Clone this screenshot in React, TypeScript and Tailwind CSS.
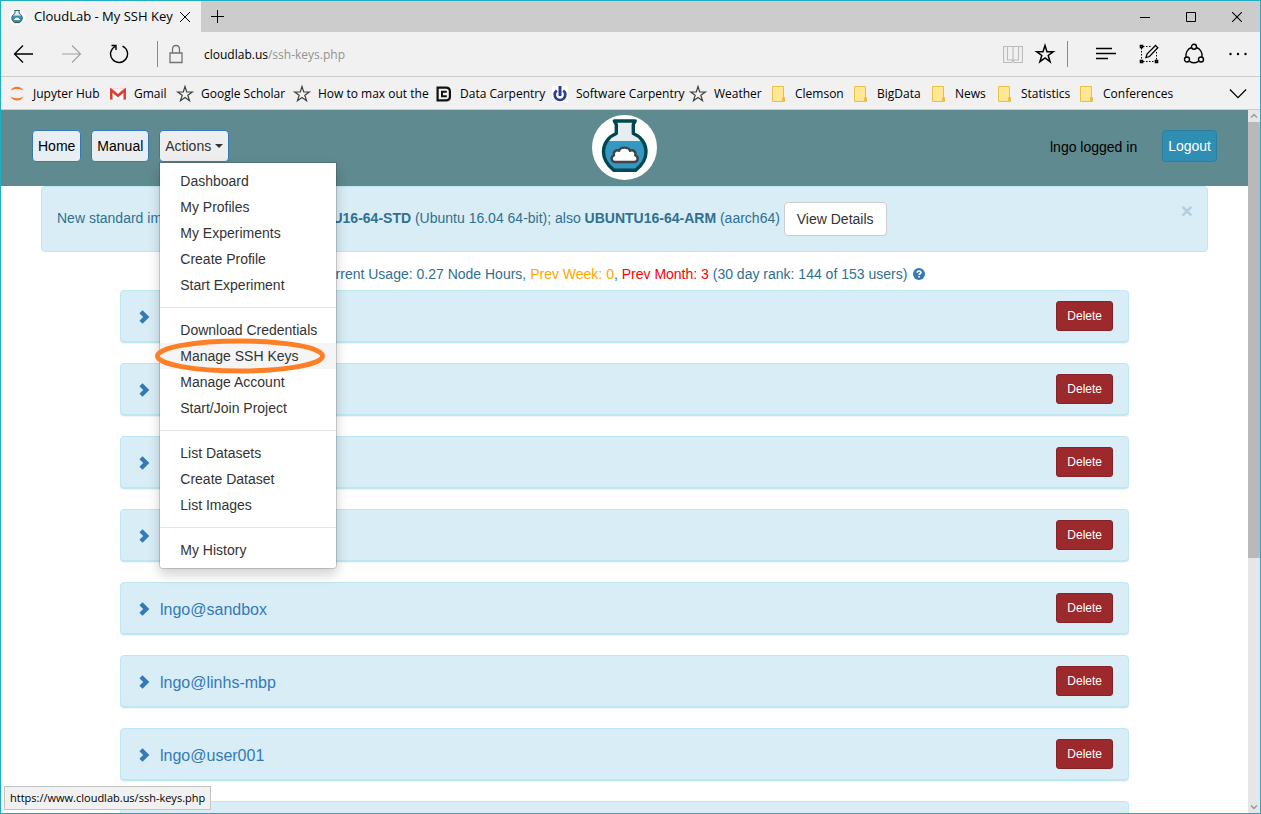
import React from "react";

const ui = "font-['Open_Sans',sans-serif]";

function Flask({ className }: { className: string }) {
  return (
    <svg viewBox="0 0 65 65" className={className} aria-hidden="true">
      <circle cx="32.5" cy="32.5" r="32.5" fill="#fff" />
      <path d="M25 6V18.500C17 21.500 11.500 28 11.500 36.500C11.500 44 16 50 22.500 55.500H43C49.500 50 54 44 54 36.500C54 28 48.500 21.500 40.500 18.500V6Z" fill="#e6edf0" />
      <path d="M14.500 26H51C56 36 54 47 43 55.500H22.500C11.500 47 9.500 36 14.500 26Z" fill="#3399c2" />
      <path d="M22.300 6H43.200L41.300 9.500V18.500C49 21.500 54 28.500 54 37C54 45 49 51 43.500 55.300H22C16.500 51 11.500 45 11.500 37C11.500 28.500 16.500 21.500 24.300 18.500V9.500Z" fill="none" stroke="#01474f" strokeWidth="3.400" strokeLinejoin="round" />
      <path d="M23.500 47C18.800 47 18.500 41.500 22 40.300C21 36.500 24.500 34.300 27 35.800C28.500 31.500 36.500 31.500 38 35.800C40.800 34.300 44.300 36.500 43.300 40.300C46.800 41.500 46.500 47 41.800 47Z" fill="#fff" stroke="#444" strokeWidth="2.400" strokeLinejoin="round" />
    </svg>
  );
}

function Line({ d, className, w = 1.2, box = "0 0 20 20" }: { d: string; className: string; w?: number; box?: string }) {
  return (
    <svg viewBox={box} className={className} fill="none" stroke="currentColor" strokeWidth={w} aria-hidden="true">
      <path d={d} />
    </svg>
  );
}

const starPath = "M10 2.500L11.700 8H17.300L12.800 11.300L14.500 16.700L10 13.400L5.500 16.700L7.200 11.300L2.700 8H8.300Z";

function BookmarkIcon({ kind }: { kind: string }) {
  const size = "h-4 w-4 shrink-0";
  if (kind === "jupyter")
    return (
      <svg viewBox="0 0 16 16" className={size} fill="#f37726" aria-hidden="true">
        <path d="M1.500 4.800C4 -.5 12 -.5 14.500 4.800C11 2.400 5 2.400 1.500 4.800ZM1.500 10.500C4 15.800 12 15.800 14.500 10.500C11 12.900 5 12.900 1.500 10.500Z" />
      </svg>
    );
  if (kind === "gmail")
    return (
      <svg viewBox="0 0 16 16" className={size} aria-hidden="true">
        <rect y="2.500" width="16" height="11" fill="#f4c4c0" />
        <path d="M3 3H13L8 7.500ZM3 13.500V8L8 11L13 8V13.500Z" fill="#fff" />
        <path d="M1.200 13.500V4L8 9.700L14.800 4V13.500" fill="none" stroke="#dc3b33" strokeWidth="2.300" />
      </svg>
    );
  if (kind === "data")
    return (
      <svg viewBox="0 0 16 16" className={size} fill="none" stroke="#111" strokeWidth="2.200" aria-hidden="true">
        <path d="M1.600 1.600H10Q13.900 1.600 13.900 5.500V10.500Q13.900 14.400 10 14.400H1.600Z" />
        <path d="M10.800 5.800H6V10.200H10.800" strokeWidth="2" />
      </svg>
    );
  if (kind === "software")
    return (
      <svg viewBox="0 0 16 16" className={size} fill="none" stroke="#2b3f91" aria-hidden="true">
        <rect width="16" height="16" fill="#fff" stroke="none" />
        <path d="M4.800 4.500A5.300 5.300 0 1 0 11.200 4.500" strokeWidth="2.700" />
        <path d="M8 0V10" strokeWidth="3" />
      </svg>
    );
  if (kind === "folder")
    return (
      <svg viewBox="0 0 16 16" className={size} fill="#ffe793" stroke="#e9c046" aria-hidden="true">
        <path d="M1.500 .5H12.500V15.500H1.500ZM11.500 15.500V11.500L12.500 10.500L13.500 11.500V15.500Z" />
      </svg>
    );
  return <Line d={starPath} className="-mx-0.5 h-5 w-5 shrink-0 text-neutral-700" w={1.2} />;
}

const bookmarks = [
  { kind: "jupyter", label: "Jupyter Hub", width: "w-[101px]" },
  { kind: "gmail", label: "Gmail", width: "w-[67px]" },
  { kind: "star", label: "Google Scholar", width: "w-[117px]" },
  { kind: "star", label: "How to max out the", width: "w-[142px]" },
  { kind: "data", label: "Data Carpentry", width: "w-[116px]" },
  { kind: "software", label: "Software Carpentry", width: "w-[138px]" },
  { kind: "star", label: "Weather", width: "w-[81px]" },
  { kind: "folder", label: "Clemson", width: "w-[82px]" },
  { kind: "folder", label: "BigData", width: "w-[78px]" },
  { kind: "folder", label: "News", width: "w-[66px]" },
  { kind: "folder", label: "Statistics", width: "w-[82px]" },
  { kind: "folder", label: "Conferences", width: "w-[100px]" },
];

const menuGroups = [
  ["Dashboard", "My Profiles", "My Experiments", "Create Profile", "Start Experiment"],
  ["Download Credentials", "Manage SSH Keys", "Manage Account", "Start/Join Project"],
  ["List Datasets", "Create Dataset", "List Images"],
  ["My History"],
];

const keys = ["", "", "", "", "lngo@sandbox", "lngo@linhs-mbp", "lngo@user001"];

function TitleBar() {
  return (
    <div className="flex h-[31px] shrink-0 items-stretch bg-[#ccc]">
      <div className="flex w-[200px] items-center bg-[#f1f1f1] pl-2">
        <Flask className="h-4 w-4" />
        <span className="ml-[9px] w-[145px] whitespace-nowrap text-[13px]">CloudLab - My SSH Key</span>
        <button aria-label="Close tab"><Line d="M1 1L11 11M11 1L1 11" box="0 0 12 12" w={1} className="h-3 w-3" /></button>
      </div>
      <button aria-label="New tab" className="pl-2.5"><Line d="M6.500 0V13M0 6.500H13" box="0 0 13 13" w={1} className="h-[13px] w-[13px]" /></button>
      <div className="ml-auto flex items-center gap-9 pr-[18px]">
        <button aria-label="Minimize"><Line d="M0 5.500H10" box="0 0 10 10" w={1} className="h-2.5 w-2.5" /></button>
        <button aria-label="Maximize"><Line d="M.5 .5H9.500V9.500H.5Z" box="0 0 10 10" w={1} className="h-2.5 w-2.5" /></button>
        <button aria-label="Close"><Line d="M0 0L10 10M10 0L0 10" box="0 0 10 10" w={1.1} className="h-2.5 w-2.5" /></button>
      </div>
    </div>
  );
}

function AddressBar() {
  return (
    <div className="flex h-[45px] shrink-0 items-center border-b border-[#ccc] bg-[#f1f1f1] pl-3">
      <button aria-label="Back"><Line d="M20 10H1.500M10 1.500L1.500 10L10 18.500" w={1.3} className="h-5 w-5" /></button>
      <button aria-label="Forward" className="ml-[29px] text-[#a0a0a0]"><Line d="M0 10H18.500M10 1.500L18.500 10L10 18.500" w={1.1} className="h-5 w-5" /></button>
      <button aria-label="Refresh" className="ml-[27px]"><Line d="M13.500 2.200A8.500 8.500 0 1 1 6 2.500M2.500 1.500H7V6" w={1.4} className="h-5 w-5" /></button>
      <span className="ml-7 h-[26px] w-px bg-[#8a8a8a]" />
      <Line d="M1 9H13V18.500H1ZM3.500 9V5.500Q3.500 1.500 7 1.500Q10.500 1.500 10.500 5.500V9" box="0 0 14 20" w={1.3} className="ml-[11px] h-5 w-3.5 text-neutral-500" />
      <div className="ml-[21px] flex-1 pt-0.5 text-xs text-black">cloudlab.us<span className="text-[#919191]">/ssh-keys.php</span></div>
      <button aria-label="Reading view" className="text-[#bbb]"><Line d="M10 2.500V17M10 2.500H4.500V16H9L10 17L11 16H15.500V2.500ZM4 2.500H.6V18.500H8.500L10 17.500L11.500 18.500H19.400V2.500H16" w={1.1} className="h-5 w-5" /></button>
      <button aria-label="Favorites" className="ml-[11px]"><Line d="M11 2.500L13 8.700H19.300L14.200 12.500L16.100 18.700L11 14.900L5.900 18.700L7.800 12.500L2.700 8.700H9Z" box="0 0 22 22" w={1.5} className="h-[22px] w-[22px]" /></button>
      <span className="ml-[11px] h-[26px] w-px bg-[#8a8a8a]" />
      <button aria-label="Hub" className="ml-7"><Line d="M0 4.500H16M0 9.500H20M0 14.500H12" w={1.3} className="h-5 w-5" /></button>
      <button aria-label="Web note" className="ml-[23px]">
        <svg viewBox="0 0 20 20" className="h-5 w-5" fill="none" stroke="currentColor" aria-hidden="true">
          <path d="M2.500 4V17M4 17.500H16M17.500 8V17M4 2.500H12" strokeDasharray="1.500 1.500" />
          <path d="M1.500 1.500H3.500V3.500H1.500ZM1.500 16.500H3.500V18.500H1.500ZM16.500 16.500H18.500V18.500H16.500Z" strokeWidth="1.600" />
          <path d="M7 13.500L8 10L16.500 1.500L18.800 3.800L10.500 12.500Z" strokeWidth="1.300" />
        </svg>
      </button>
      <button aria-label="Share" className="ml-6">
        <svg viewBox="0 0 22 22" className="h-[22px] w-[22px]" fill="none" stroke="currentColor" strokeWidth="1.400" aria-hidden="true">
          <circle cx="11" cy="3.800" r="2.500" /><circle cx="4" cy="16.500" r="2.500" /><circle cx="18" cy="16.500" r="2.500" />
          <path d="M8.500 4.500A8.500 8.500 0 0 0 3 14M13.500 4.500A8.500 8.500 0 0 1 19 14M6.500 18.300A8.500 8.500 0 0 0 15.500 18.300" />
        </svg>
      </button>
      <button aria-label="More" className="ml-[23px] mr-3">
        <svg viewBox="0 0 20 20" className="h-5 w-5" fill="currentColor" aria-hidden="true"><circle cx="2.500" cy="10" r="1.200" /><circle cx="10" cy="10" r="1.200" /><circle cx="17.500" cy="10" r="1.200" /></svg>
      </button>
    </div>
  );
}

function Bookmarks() {
  return (
    <nav aria-label="Favorites" className="flex h-[33px] shrink-0 items-center border-b border-[#ccc] bg-[#f1f1f1] pl-2 pt-0.5">
      {bookmarks.map((b) => (
        <a key={b.label} href="#" className={`flex shrink-0 items-center gap-2 whitespace-nowrap text-xs ${b.width}`}>
          <BookmarkIcon kind={b.kind} />
          {b.label}
        </a>
      ))}
      <button aria-label="More favorites" className="ml-auto mr-[13px]"><Line d="M1 5L10 14L19 5" w={1.4} className="h-5 w-[18px]" /></button>
    </nav>
  );
}

function ActionsMenu() {
  return (
    <div className="absolute left-0 top-8 z-10 w-[178px] rounded-b border border-black/15 bg-white bg-clip-padding py-[5px] text-[#333] shadow-[0_6px_12px_rgba(0,0,0,0.175)]">
      {menuGroups.map((group, i) => (
        <ul key={group[0]} className={i ? "mt-[9px] border-t border-[#e5e5e5] pt-[9px]" : ""}>
          {group.map((item) => (
            <li key={item} className="relative">
              <a href="#" className={`block whitespace-nowrap px-5 py-[3px] leading-5 ${item === "Manage SSH Keys" ? "bg-[#f5f5f5]" : ""}`}>{item}</a>
              {item === "Manage SSH Keys" && (
                <svg viewBox="0 0 172 36" className="pointer-events-none absolute -left-1.5 -top-[5px] z-10 h-9 w-[172px]" aria-hidden="true">
                  <ellipse cx="86" cy="18" rx="82.5" ry="15" fill="none" stroke="#ff7f27" strokeWidth="5" />
                </svg>
              )}
            </li>
          ))}
        </ul>
      ))}
    </div>
  );
}

function Header() {
  const nav = "h-8 rounded border border-[#337ab7] px-[5px]";
  return (
    <header className="grid h-[76px] grid-cols-[1fr_auto_1fr] items-center bg-[#5f8a8f]">
      <div className="flex items-center gap-2.5 pb-1 pl-[31px]">
        <button className={`${nav} bg-[#e8eef1] text-black`}>Home</button>
        <button className={`${nav} bg-[#e8eef1] text-black`}>Manual</button>
        <div className="relative">
          <button aria-expanded="true" className={`${nav} flex items-center gap-1 bg-[#eee] text-[#333]`}>
            Actions
            <svg viewBox="0 0 8 4" className="h-1 w-2" fill="currentColor" aria-hidden="true"><path d="M0 0H8L4 4Z" /></svg>
          </button>
          <ActionsMenu />
        </div>
      </div>
      <Flask className="mb-0.5 h-[65px] w-[65px]" />
      <div className="flex items-center justify-end gap-[25px] pb-1 pr-[31px]">
        <span className="pt-0.5 text-black">lngo logged in</span>
        <button className="h-8 rounded border border-[#2a7fa0] bg-[#2f8fb3] px-[5px] text-white">Logout</button>
      </div>
    </header>
  );
}

function Chevron() {
  return (
    <svg viewBox="0 0 11 14" className="mb-0.5 h-3.5 w-[11px]" fill="none" stroke="#337ab7" strokeWidth="4.400" aria-hidden="true">
      <path d="M2 1.800L7.200 7L2 12.200" />
    </svg>
  );
}

const rowStyle = "h-[53px] shrink-0 rounded border border-[#bce8f1] bg-[#d9edf7] shadow-[inset_0_-1px_0_#bce8f1,0_1px_1px_rgba(0,0,0,0.05)]";

function KeyRow({ name }: { name: string }) {
  return (
    <li className={`flex items-center justify-between pl-[18px] pr-[15px] ${rowStyle}`}>
      <a href="#" aria-label={name || "Key"} className="flex items-center gap-2.5 pt-0.5 text-base text-[#337ab7]">
        <Chevron />
        {name}
      </a>
      <button className="mb-px h-[30px] rounded-[3px] border border-[#852328] bg-[#9c292b] px-2.5 text-xs text-white">Delete</button>
    </li>
  );
}

function Page() {
  return (
    <main className="min-w-0 flex-1 overflow-hidden bg-white font-['Liberation_Sans',Arial,sans-serif] text-sm leading-5 text-[#31708f]">
      <Header />
      <div className="mx-10 flex h-[66px] items-center rounded border border-[#bce8f1] bg-[#d9edf7] pl-[15px] pr-3.5">
        <p className="flex-1 whitespace-nowrap">
          New standard images are available: <b>UBUNTU16-64-STD</b> (Ubuntu 16.04 64-bit); also <b>UBUNTU16-64-ARM</b> (aarch64){" "}
          <button className="h-[34px] rounded border border-[#ccc] bg-white px-3 align-middle text-[#333]">View Details</button>
        </p>
        <button aria-label="Dismiss" className="mb-4 text-[21px] font-bold text-[#b2cfdd]">×</button>
      </div>
      <p className="mt-3 flex items-center justify-center gap-1.5 pr-1.5">
        <span>
          Current Usage: 0.27 Node Hours, <span className="text-[#ffa500]">Prev Week: 0</span>, <span className="text-[#f00]">Prev Month: 3</span> (30 day rank: 144 of 153 users)
        </span>
        <button aria-label="Help">
          <svg viewBox="0 0 12 12" className="h-3 w-3" aria-hidden="true">
            <circle cx="6" cy="6" r="6" fill="#337ab7" />
            <path d="M4.200 4.800Q4.200 3 6 3Q7.900 3 7.900 4.500Q7.900 5.400 6.800 5.900Q6.100 6.300 6.100 7M6.100 7.900V9.400" fill="none" stroke="#fff" strokeWidth="1.700" />
          </svg>
        </button>
      </p>
      <ul className="mx-[119px] mt-1.5 flex flex-col gap-5">
        {keys.map((k, i) => <KeyRow key={i} name={k} />)}
        <li className={rowStyle} />
      </ul>
    </main>
  );
}

export default function App() {
  return (
    <div className={`relative flex h-screen flex-col overflow-hidden border border-[#1eadc1] text-black ${ui}`}>
      <TitleBar />
      <AddressBar />
      <Bookmarks />
      <div className="flex min-h-0 flex-1">
        <Page />
        <div className="flex w-3 shrink-0 flex-col items-center bg-[#e6e6e6] text-[#999]">
          <Line d="M3 7.500L6 4.500L9 7.500" box="0 0 12 12" w={1.5} className="h-3 w-3 shrink-0" />
          <div className="h-[62%] w-full bg-[#b9b9b9]" />
          <Line d="M3 4.500L6 7.500L9 4.500" box="0 0 12 12" w={1.5} className="mt-auto h-3 w-3 shrink-0" />
        </div>
      </div>
      <div className="absolute bottom-[3px] left-[3px] flex h-6 items-center whitespace-nowrap border border-[#c4c4c4] bg-[#f1f1f1] px-[5px] text-[11px]">
        https://www.cloudlab.us/ssh-keys.php
      </div>
    </div>
  );
}
